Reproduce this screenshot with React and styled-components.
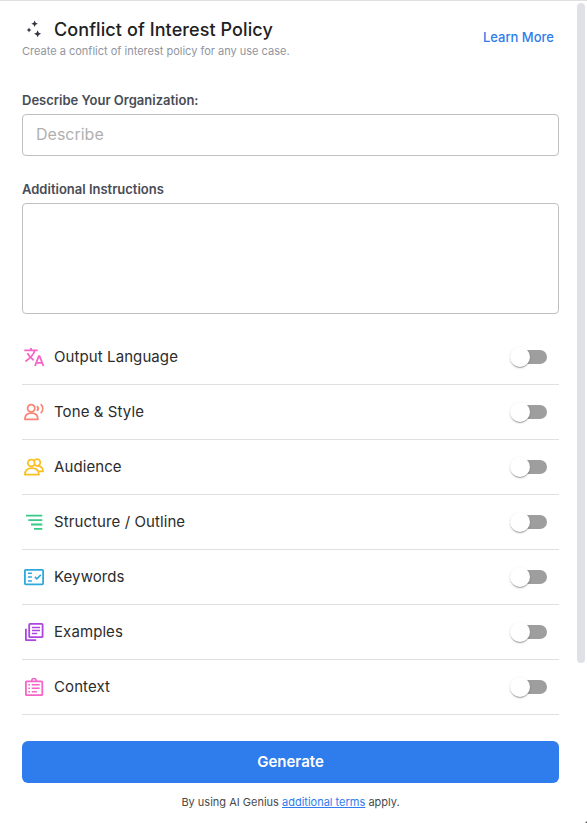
import * as React from 'react';
import { useState } from 'react';
import styled, { createGlobalStyle } from 'styled-components';

const GlobalStyle = createGlobalStyle`
  * {
    box-sizing: border-box;
  }

  body {
    margin: 0;
    background-color: #fff;
    font-family: Inter, 'Liberation Sans', sans-serif;
    overflow: hidden;
  }
`;

const Wrapper = styled.div`
  position: relative;
  display: flex;
  height: 823px;
  border-top: 1px solid #e0e0e0;
`;

const Panel = styled.main`
  width: 537px;
  margin: 0 18px 0 22px;
`;

const ScrollTrack = styled.div`
  width: 8px;
  padding-top: 2px;
`;

const ScrollThumb = styled.div`
  height: 660px;
  border-radius: 4px;
  background-color: #dfe1e6;
`;

const ResizeCorner = styled.span`
  position: absolute;
  right: 0;
  bottom: 0;
  border: 1.5px solid #555;
  border-top-color: transparent;
  border-left-color: transparent;
`;

const Header = styled.header`
  display: flex;
  justify-content: space-between;
  align-items: center;
  height: 73px;
  padding-right: 5px;
`;

const TitleBlock = styled.div`
  padding-top: 2px;
`;

const TitleRow = styled.div`
  display: flex;
  align-items: center;
  gap: 8px;
  height: 24px;
`;

const Title = styled.h1`
  margin: 0;
  color: #212121;
  font-size: 18px;
  font-weight: 500;
  line-height: 24px;
  letter-spacing: 0.09px;
`;

const Subtitle = styled.p`
  margin: 0;
  color: #9095a0;
  font-size: 11px;
  line-height: 18px;
`;

const LearnMore = styled.a`
  padding-bottom: 2px;
  color: #2f7ced;
  font-size: 13px;
  font-weight: 500;
`;

const Field = styled.div`
  display: flex;
  flex-direction: column;
  margin-top: ${(props) => props.$top}px;
`;

const Label = styled.label`
  color: #484c56;
  font-size: 13px;
  font-weight: 600;
  line-height: 20px;
  margin-bottom: 4px;
`;

const Input = styled.input`
  height: 42px;
  padding: 0 13px 2px;
  border: 1px solid #c0c0c0;
  border-radius: 4px;
  outline: none;
  font-family: inherit;
  font-size: 16px;

  &::placeholder {
    color: #b0b0b0;
  }
`;

const TextArea = styled.textarea`
  height: 111px;
  padding: 12px 13px;
  border: 1px solid #c0c0c0;
  border-radius: 4px;
  outline: none;
  resize: none;
  font-family: inherit;
  font-size: 16px;
`;

const Options = styled.div`
  margin-top: 16px;
`;

const OptionRow = styled.div`
  display: flex;
  align-items: center;
  height: 55px;
  padding-right: 12px;
  border-bottom: 1px solid #e0e0e0;
`;

const OptionName = styled.span`
  flex: 1;
  margin-left: 8px;
  padding-bottom: 2px;
  color: #2c2c2c;
  font-size: 15px;
  letter-spacing: 0.09px;
`;

const Track = styled.button`
  display: flex;
  align-items: center;
  width: 34px;
  height: 14px;
  padding: 0;
  border: none;
  border-radius: 7px;
  background-color: ${(props) => (props.$on ? '#97bef6' : '#9e9e9e')};
  cursor: pointer;
`;

const Thumb = styled.span`
  flex: none;
  width: 20px;
  height: 20px;
  margin-left: ${(props) => (props.$on ? 17 : -3)}px;
  border-radius: 50%;
  background-color: ${(props) => (props.$on ? '#2f7ced' : '#fff')};
  box-shadow: 0 2px 1px -1px rgba(0, 0, 0, 0.2), 0 1px 1px rgba(0, 0, 0, 0.14),
    0 1px 3px rgba(0, 0, 0, 0.12);
`;

const GenerateButton = styled.button`
  display: block;
  width: 100%;
  height: 42px;
  margin-top: 26px;
  padding: 0 0 2px;
  border: none;
  border-radius: 6px;
  background-color: #2f7ced;
  color: #fff;
  font-family: inherit;
  font-size: 15px;
  font-weight: 600;
  cursor: pointer;
`;

const Terms = styled.p`
  margin: 11px 0 0;
  color: #4a4a4a;
  font-size: 11px;
  line-height: 16px;
  text-align: center;

  a {
    color: #2f7ced;
    text-decoration: underline;
    text-underline-offset: 1px;
  }
`;

const Icon = ({ color, children }) => (
  <svg
    width="24"
    height="24"
    viewBox="0 0 24 24"
    fill="none"
    stroke={color}
    strokeWidth="1.8"
    strokeLinejoin="round"
  >
    {children}
  </svg>
);

const SparkleIcon = () => (
  <Icon color="none">
    <g fill="#30343f">
      <path d="M12.6 2.5l1 2.3 2.3 1-2.3 1-1 2.3-1-2.3-2.3-1 2.3-1z" />
      <path d="M7 9.5l.8 1.7 1.7.8-1.7.8-.8 1.7-.8-1.7-1.7-.8 1.7-.8z" />
      <path d="M15.6 12.3l1.1 2.4 2.4 1.1-2.4 1.1-1.1 2.4-1.1-2.4-2.4-1.1 2.4-1.1z" />
    </g>
  </Icon>
);

const LanguageIcon = () => (
  <Icon color="#f564c6">
    <path d="M2.3 5.4h13.4M9 3v2.4M12.8 5.4C11.8 9.4 8.5 13 3.4 16.4M5.4 8.2c1.3 2.8 3.5 5 6.3 7" />
    <path d="M13 21l3.8-9.8h.8l3.8 9.8M14.2 17.8h6" />
  </Icon>
);

const ToneIcon = () => (
  <Icon color="#fc8474">
    <circle cx="9.2" cy="8.2" r="3.6" />
    <path d="M2.9 19.3c0-4 2.5-6.2 6.5-6.2s6.5 2.2 6.5 6.2z" />
    <path d="M15 6.1c1.4 1.4 1.4 3.4 0 4.8M18.8 4.1c2.6 2.6 2.6 6.3 0 9" />
  </Icon>
);

const AudienceIcon = () => (
  <Icon color="#fabf22">
    <circle cx="9.2" cy="8" r="3.4" />
    <path d="M2.9 19.7c0-4.2 2.6-6.5 7-6.5s7 2.3 7 6.5z" />
    <path d="M12.3 5.9c.8-2.1 4-2.5 5.4-.5 1.3 1.9.4 4.5-1.6 5.2 3 .7 4.8 2.7 5 5.7h-5M12.2 9.6c.7 1 2.1 1.5 3.9 1" />
  </Icon>
);

const StructureIcon = () => (
  <Icon color="#37c987">
    <path d="M4 5.7h16.3M6.3 10.2h14M9 14.5h11.3M12 18.9h8.3" />
  </Icon>
);

const KeywordsIcon = () => (
  <Icon color="#2fa8dc">
    <rect x="2.9" y="4.8" width="18.2" height="14.6" rx="0.8" />
    <path strokeWidth="1.5" d="M5.9 8.3h4M5.9 12.1h4M5.9 15.9h4M12.8 11.9l2 2 4-4" />
  </Icon>
);

const ExamplesIcon = () => (
  <Icon color="#b044e0">
    <rect x="7.2" y="3.8" width="13.4" height="13.4" rx="0.8" />
    <path d="M3.9 8.8v11.3h10.3" />
    <path strokeWidth="1.5" d="M10 7.4h8M10 10.5h8M10 13.6h5.2" />
  </Icon>
);

const ContextIcon = () => (
  <Icon color="#f564c6">
    <rect x="3.9" y="6.3" width="16.4" height="13.9" rx="0.8" />
    <path strokeWidth="1.5" d="M9.8 6.2V5.4c0-2.4 4.4-2.4 4.4 0v.8" />
    <path strokeWidth="1.5" d="M6.4 9.8h1.6M6.4 13.3h1.6M6.4 16.8h1.6M9.7 9.8h8M9.7 13.3h8M9.7 16.8h5.2" />
  </Icon>
);

const options = [
  { name: 'Output Language', icon: LanguageIcon },
  { name: 'Tone & Style', icon: ToneIcon },
  { name: 'Audience', icon: AudienceIcon },
  { name: 'Structure / Outline', icon: StructureIcon },
  { name: 'Keywords', icon: KeywordsIcon },
  { name: 'Examples', icon: ExamplesIcon },
  { name: 'Context', icon: ContextIcon },
];

const Option = ({ name, icon: OptionIcon }) => {
  const [on, setOn] = useState(false);

  return (
    <OptionRow>
      <OptionIcon />
      <OptionName>{name}</OptionName>
      <Track $on={on} role="switch" aria-checked={on} onClick={() => setOn(!on)}>
        <Thumb $on={on} />
      </Track>
    </OptionRow>
  );
};

export const App = () => {
  return (
    <>
      <GlobalStyle />
      <Wrapper>
        <Panel>
          <Header>
            <TitleBlock>
              <TitleRow>
                <SparkleIcon />
                <Title>Conflict of Interest Policy</Title>
              </TitleRow>
              <Subtitle>Create a conflict of interest policy for any use case.</Subtitle>
            </TitleBlock>
            <LearnMore>Learn More</LearnMore>
          </Header>
          <Field $top={16}>
            <Label htmlFor="organization">Describe Your Organization:</Label>
            <Input id="organization" placeholder="Describe" />
          </Field>
          <Field $top={23}>
            <Label htmlFor="instructions">Additional Instructions</Label>
            <TextArea id="instructions" />
          </Field>
          <Options>
            {options.map((option) => (
              <Option key={option.name} {...option} />
            ))}
          </Options>
          <GenerateButton>Generate</GenerateButton>
          <Terms>
            By using AI Genius <a>additional terms</a> apply.
          </Terms>
        </Panel>
        <ScrollTrack>
          <ScrollThumb />
        </ScrollTrack>
        <ResizeCorner />
      </Wrapper>
    </>
  );
};

export default App;
